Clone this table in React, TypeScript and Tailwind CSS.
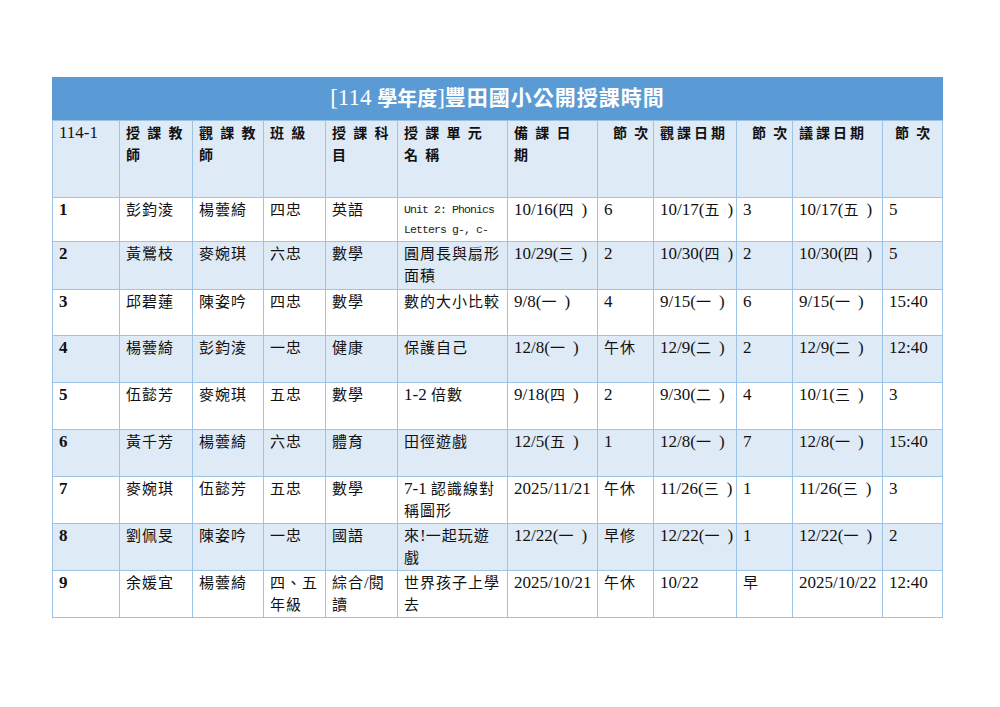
import React from 'react';

const COLS =
  'grid grid-cols-[68px_73px_71px_62px_72px_110px_90px_56px_83px_56px_90px_60px]';
const FONT = "font-['Liberation_Serif','Noto_Sans_CJK_TC',serif]";

const CJK = /[\u3000-\u9fff\uff00-\uffef]/;

// latin runs stay at the cell size, CJK runs are set a bit smaller like the source doc
const mix = (text: string) => {
  const out: React.ReactNode[] = [];
  let buf = '';
  let cjk = false;
  const flush = () => {
    if (!buf) return;
    out.push(
      cjk ? (
        <span key={out.length} className="text-[15px] tracking-[1px]">
          {buf}
        </span>
      ) : (
        <React.Fragment key={out.length}>{buf}</React.Fragment>
      ),
    );
    buf = '';
  };
  for (const ch of text) {
    const isC = CJK.test(ch);
    if (isC !== cjk) {
      flush();
      cjk = isC;
    }
    buf += ch;
  }
  flush();
  return out;
};

// "10/16(四)" -> date, then weekday with the gap before the closing paren
const DateText: React.FC<{ value: string }> = ({ value }) => {
  const m = value.match(/^(.*)\((.)\)$/);
  if (!m) return <>{mix(value)}</>;
  return (
    <>
      {m[1]}(<span className="text-[15px] mr-[8px]">{m[2]}</span>)
    </>
  );
};

const lines = (...parts: string[]) =>
  parts.map((p, i) => (
    <React.Fragment key={i}>
      {i > 0 && <br />}
      {mix(p)}
    </React.Fragment>
  ));

type Row = { h: string; bg: string; cells: (string | React.ReactNode)[] };

const rows: Row[] = [
  {
    h: 'h-[44px]',
    bg: 'bg-white',
    cells: ['1', '彭鈞淩', '楊蕓綺', '四忠', '英語', 'UNIT', '10/16(四)', '6', '10/17(五)', '3', '10/17(五)', '5'],
  },
  {
    h: 'h-[48px]',
    bg: 'bg-[#deeaf6]',
    cells: ['2', '黃鶯枝', '麥婉琪', '六忠', '數學', lines('圓周長與扇形', '面積'), '10/29(三)', '2', '10/30(四)', '2', '10/30(四)', '5'],
  },
  {
    h: 'h-[46px]',
    bg: 'bg-white',
    cells: ['3', '邱碧蓮', '陳姿吟', '四忠', '數學', '數的大小比較', '9/8(一)', '4', '9/15(一)', '6', '9/15(一)', '15:40'],
  },
  {
    h: 'h-[47px]',
    bg: 'bg-[#deeaf6]',
    cells: ['4', '楊蕓綺', '彭鈞淩', '一忠', '健康', '保護自己', '12/8(一)', '午休', '12/9(二)', '2', '12/9(二)', '12:40'],
  },
  {
    h: 'h-[47px]',
    bg: 'bg-white',
    cells: ['5', '伍懿芳', '麥婉琪', '五忠', '數學', '1-2 倍數', '9/18(四)', '2', '9/30(二)', '4', '10/1(三)', '3'],
  },
  {
    h: 'h-[47px]',
    bg: 'bg-[#deeaf6]',
    cells: ['6', '黃千芳', '楊蕓綺', '六忠', '體育', '田徑遊戲', '12/5(五)', '1', '12/8(一)', '7', '12/8(一)', '15:40'],
  },
  {
    h: 'h-[47px]',
    bg: 'bg-white',
    cells: ['7', '麥婉琪', '伍懿芳', '五忠', '數學', lines('7-1 認識線對', '稱圖形'), '2025/11/21', '午休', '11/26(三)', '1', '11/26(三)', '3'],
  },
  {
    h: 'h-[47px]',
    bg: 'bg-[#deeaf6]',
    cells: ['8', '劉佩旻', '陳姿吟', '一忠', '國語', lines('來!一起玩遊', '戲'), '12/22(一)', '早修', '12/22(一)', '1', '12/22(一)', '2'],
  },
  {
    h: 'h-[47px]',
    bg: 'bg-white',
    cells: ['9', '余媛宜', '楊蕓綺', lines('四、五', '年級'), lines('綜合/閱', '讀'), lines('世界孩子上學', '去'), '2025/10/21', '午休', '10/22', '早', '2025/10/22', '12:40'],
  },
];

const headers: React.ReactNode[] = [
  <div className="font-normal">114-1</div>,
  lines('授 課 教', '師'),
  lines('觀 課 教', '師'),
  lines('班 級'),
  lines('授 課 科', '目'),
  lines('授 課 單 元', '名 稱'),
  lines('備 課 日', '期'),
  <div className="pl-[9px]">{lines('節 次')}</div>,
  lines('觀課日期'),
  <div className="pl-[9px]">{lines('節 次')}</div>,
  lines('議課日期'),
  <div className="pl-[6px]">{lines('節 次')}</div>,
];

const cellBase =
  'border-r border-b border-[#9dc3e6] pl-[6px] pt-[1px] leading-[21px] whitespace-nowrap overflow-hidden';

export default function App() {
  return (
    <div className={`min-h-[707px] w-[1000px] bg-white pt-[77px] pl-[52px] ${FONT} text-[17px] text-[#111]`}>
      <div className="w-[891px]">
        <div className="flex h-[44px] items-center justify-center border-b border-[#9dc3e6] bg-[#5b9bd5] text-white">
          <span className="text-[23px]">[114&nbsp;</span>
          <span className="text-[20px] font-bold">學年度</span>
          <span className="text-[23px]">]</span>
          <span className="text-[21px] font-bold tracking-[1px]">豐田國小公開授課時間</span>
        </div>

        <div className={`${COLS} h-[77px] bg-[#deeaf6] font-bold [&_span]:text-[14px] [&_span]:tracking-[3px]`}>
          {headers.map((h, i) => (
            <div key={i} className={`${cellBase} ${i === 0 ? 'border-l pl-[5px]' : ''}`}>
              {h}
            </div>
          ))}
        </div>

        {rows.map((r, ri) => (
          <div key={ri} className={`${COLS} ${r.h} ${r.bg}`}>
            {r.cells.map((c, ci) => (
              <div key={ci} className={`${cellBase} ${ci === 0 ? 'border-l font-bold pl-[5px]' : ''}`}>
                {c === 'UNIT' ? (
                  <div className="font-['Liberation_Mono',monospace] text-[11.5px] tracking-[-0.9px] leading-[20px] pt-[1px] text-[#222]">
                    Unit 2: Phonics
                    <br />
                    Letters g-, c-
                  </div>
                ) : typeof c === 'string' ? (
                  <DateText value={c} />
                ) : (
                  c
                )}
              </div>
            ))}
          </div>
        ))}
      </div>
    </div>
  );
}
